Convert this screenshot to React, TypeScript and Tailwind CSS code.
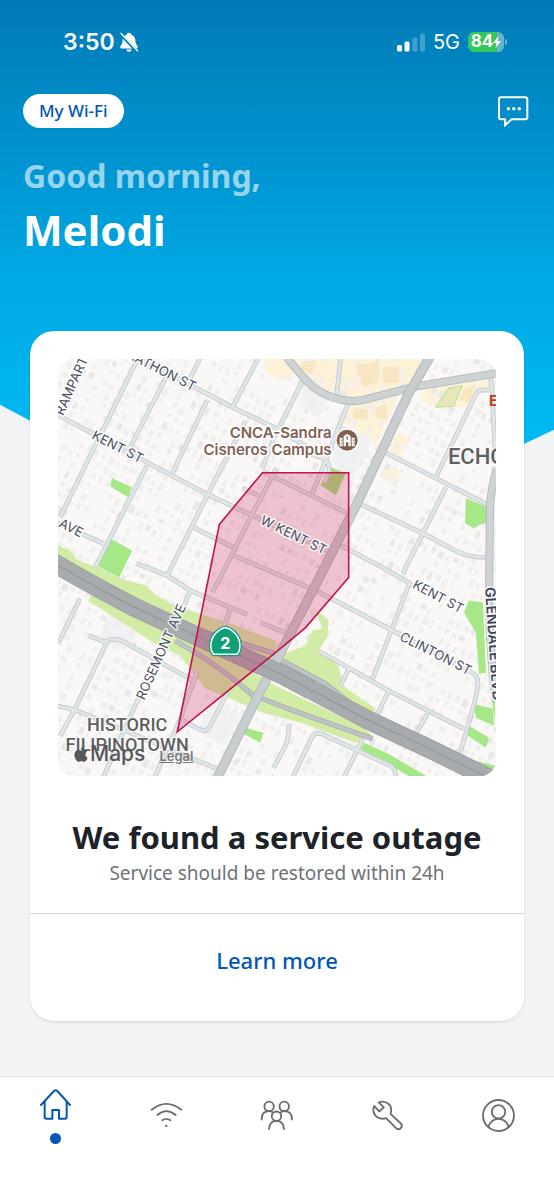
import type { ReactNode } from 'react';
import { FaApple } from 'react-icons/fa';

const MINOR_ROADS = [
  'M138 358L60 517',
  'M167 375L130 447',
  'M56 414L207 494L330 552',
  'M200 358L188 382',
  'M258 358L232 407',
  'M120 348L232 407L275 428L325 457',
  'M207 400L172 473',
  'M245 421L208 493L173 563L167 575',
  'M147 465L95 567',
  'M56 522L103 543',
  'M193 527L233 547',
  'M276 468L250 517L230 557L212 592',
  'M242 488L258 495',
  'M340 358L336 396',
  'M303 378L291 403L274 436L262 468',
  'M348 402L312 493',
  'M262 471L347 513',
  'M233 555L315 590L392 630L468 670Q478 675 477 684L474 700L458 757',
  'M291 448L320 457Q331 462 328 472L324 482',
  'M382 451L435 478L488 505',
  'M488 390H480Q477 390 475 394L435 477',
  'M489 372L491 390L494 450',
  'M358 503L422 533L458 552Q468 557 488 557',
  'M445 487L402 573',
  'M340 545L378 565L408 582L412 586',
  'M409 582L372 678',
  'M318 650L388 690L463 728',
  'M348 668L340 685',
  'M388 690L372 723',
  'M362 738L343 777',
  'M427 712L413 737',
  'M288 723Q289 736 285 745L273 767',
  'M292 777L311 737Q314 731 321 733L390 765Q395 768 395 777',
  'M56 705L75 709L130 732L217 768',
  'M88 635L104 641Q116 636 125 642L193 680',
  'M107 641L75 708L60 735',
  'M80 598L58 643',
  'M136 563L167 575L190 590L247 614',
  'M190 590L181 612',
  'M141 692L118 742L103 777',
  'M197 670L180 718L154 777',
  'M183 720L200 729Q207 731 210 725L227 692',
  'M260 622L290 634',
  'M230 608L222 630',
];

const BIG_ROADS = [
  'M286 357Q304 380 314 388Q336 404 362 400L412 387L497 373',
  'M496 468Q490 487 489 507L488 600Q489 650 495 700',
];

const HIGHWAY = 'M48 559Q92 585 133 606L193 634L280 673L367 719L433 750L490 778';
const RAMPS = 'M193 628L275 653M175 640Q215 662 252 694L285 707L372 738M278 658L325 683L378 725';
const BOULEVARD = 'M429 357L408 393L358 500L325 565L275 662L260 690L217 777';

const PARKS = [
  'M112 478L132 487L128 497L110 486Z',
  'M110 538L132 550L119 577L98 566Z',
  'M465 498L487 507L485 523L479 524L473 528L464 523Z',
  'M468 600L482 602L485 672L478 673L475 632L463 612Z',
  'M472 703L492 708L493 725L475 717Z',
  'M468 725L488 737L485 747L467 735Z',
  'M435 747L462 757L496 765V777H475L432 755Z',
  'M363 742L388 753L427 776L410 776L360 748Z',
  'M245 727L263 732L260 742L243 733Z',
  'M484 620L488 680L494 720V660Z',
];

const VERGES = [
  'M57 545L70 550L78 560L98 567L120 578L146 585L155 594L172 604L230 623L275 640L275 668L200 640L57 565Z',
  'M88 600L95 590L170 624L225 655L275 685L360 725L372 735L355 742L300 722L262 712L235 700L205 688L180 655L150 640Z',
  'M315 611L322 614L328 620L327 636L318 650L338 665L342 685L375 708L372 722L282 680L268 672L285 652L305 645L312 630L322 628Z',
];

// small building footprints, laid on the street grid
function buildFootprints(seed: number, skip: number) {
  let value = seed;
  const random = () => {
    value = (value * 16807) % 2147483647;
    return value / 2147483647;
  };
  let path = '';
  for (let row = -310; row < 310; row += 11) {
    for (let col = -310; col < 310; col += 8) {
      const w = 3 + Math.round(random() * 3);
      const h = 4 + Math.round(random() * 4);
      const shift = Math.round(random() * 2);
      if (random() > skip) {
        path += `M${276 + col} ${567 + row + shift}h${w}v${h}h${-w}z`;
      }
    }
  }
  return path;
}

const FOOTPRINTS = buildFootprints(41, 0.4);
const FOOTPRINTS_DARK = buildFootprints(977, 0.9);

function StreetLabel({ x, y, angle, children }: { x: number; y: number; angle: number; children: string }) {
  return (
    <text
      x={x}
      y={y}
      transform={`rotate(${angle} ${x} ${y})`}
      className="fill-[#474d5f] stroke-white/80 font-['Inter',sans-serif] text-[13px]"
      strokeWidth={3}
      strokeLinejoin="round"
      paintOrder="stroke"
    >
      {children}
    </text>
  );
}

function OutageMap() {
  return (
    <div className="relative overflow-hidden rounded-2xl">
      <svg viewBox="58 359 437 416" className="block w-full" role="img" aria-label="Outage area map">
        <rect x="58" y="359" width="437" height="417" fill="#f9f8f6" />
        <g fill="#fdf1d8">
          <path d="M263 359H425L408 388L360 398L335 396L312 382L300 372L280 380L266 372Z" />
          <path d="M346 404L400 393L375 445L350 425L335 420Z" />
          <path d="M425 388L495 375V390H478L470 405L440 410L418 398Z" />
          <path d="M398 432L410 437L398 458L386 452Z" />
          <path d="M385 465L400 472L395 484L380 478Z" />
        </g>
        <g fill="#f0f1f4">
          <path d="M305 385L328 397L318 418L297 405Z" />
          <path d="M342 425L372 440L352 480L330 462Z" />
          <path d="M110 610L142 625L125 650L98 640Z" />
          <path d="M213 700L240 712L225 745L196 730Z" />
        </g>
        <g transform="rotate(27 276 567)">
          <path d={FOOTPRINTS} fill="#f0efee" />
          <path d={FOOTPRINTS_DARK} fill="#e8e7e9" />
        </g>
        <g fill="#f8e6c3">
          <path d="M303 362L316 360L312 374L300 370Z" />
          <path d="M355 365L378 362V382L362 387Z" />
          <path d="M382 367H398V383H382Z" />
          <path d="M353 409H367V419H353Z" />
          <path d="M376 407L386 404V420L374 416Z" />
          <path d="M464 388L475 385L468 402L458 400Z" />
        </g>
        <path d="M448 388L461 386L453 406L435 407Z" fill="#e9e5bd" stroke="#b6e28d" strokeWidth={1} />
        <g fill="#d2eca6">{VERGES.map((d) => <path key={d} d={d} />)}</g>
        <g fill="#a6e788">{PARKS.map((d) => <path key={d} d={d} />)}</g>
        <path d="M330 467L345 473L335 495L320 485Z" fill="#a8e07f" />

        <g fill="none" strokeLinejoin="round">
          <g stroke="#bfc7ca" strokeWidth={4.600}>{MINOR_ROADS.map((d) => <path key={d} d={d} />)}</g>
          <g stroke="#e0e6e8" strokeWidth={3}>{MINOR_ROADS.map((d) => <path key={d} d={d} />)}</g>
          <g stroke="#aeb3b6" strokeWidth={8}>{BIG_ROADS.map((d) => <path key={d} d={d} />)}</g>
          <g stroke="#cdd2d4" strokeWidth={6.500}>{BIG_ROADS.map((d) => <path key={d} d={d} />)}</g>

          <path d={RAMPS} stroke="#a3a9ac" strokeWidth={5} />
          <path d={RAMPS} stroke="#bfc3c6" strokeWidth={3.500} />
          <path d={HIGHWAY} stroke="#989c9f" strokeWidth={19} />
          <path d={HIGHWAY} stroke="#a8abad" strokeWidth={17.500} />
          <path d={HIGHWAY} stroke="#8f9497" strokeWidth={1} />
          <path d={BOULEVARD} stroke="#acb1b4" strokeWidth={9.500} />
          <path d={BOULEVARD} stroke="#c8cdcf" strokeWidth={8} />
          {/* the highway bridges over the boulevard */}
          <path d="M250 660L280 673L310 689" stroke="#989c9f" strokeWidth={19} />
          <path d="M249 659L280 673L311 690" stroke="#a8abad" strokeWidth={17.500} />
          <path d="M249 659L280 673L311 690" stroke="#8f9497" strokeWidth={1} />
        </g>

        <path
          d="M262 472.500H348V577L305 627L275 652L177 731L219 524Z"
          fill="#d0104c"
          fillOpacity={0.23}
          stroke="#c4124c"
          strokeWidth={1.6}
        />

        <StreetLabel x={63} y={416} angle={-66}>RAMPART</StreetLabel>
        <StreetLabel x={108} y={348} angle={27}>MARATHON ST</StreetLabel>
        <StreetLabel x={91} y={438} angle={27}>KENT ST</StreetLabel>
        <StreetLabel x={58} y={526} angle={27}>AVE</StreetLabel>
        <StreetLabel x={259} y={523} angle={26}>W KENT ST</StreetLabel>
        <StreetLabel x={411} y={587} angle={28}>KENT ST</StreetLabel>
        <StreetLabel x={398} y={639} angle={27}>CLINTON ST</StreetLabel>
        <StreetLabel x={144} y={700} angle={-66}>ROSEMONT AVE</StreetLabel>
        <text
          x="484"
          y="587"
          transform="rotate(86 484 587)"
          className="fill-[#40465a] stroke-white/80 font-['Inter',sans-serif] text-[14px] font-semibold"
          strokeWidth={3}
          paintOrder="stroke"
        >
          GLENDALE BLVD
        </text>

        <g
          className="fill-[#815f53] stroke-white/90 font-['Inter',sans-serif] text-[15px] font-semibold"
          strokeWidth={3}
          paintOrder="stroke"
          textAnchor="end"
        >
          <text x="331" y="438">CNCA-Sandra</text>
          <text x="331" y="455">Cisneros Campus</text>
        </g>
        <circle cx="346.500" cy="440" r="11.500" fill="#fff" />
        <circle cx="346.500" cy="440" r="10.500" fill="#82604f" />
        <g fill="#fff">
          <path d="M343 446V436L346.500 433.500L350 436V446H347.700V442H345.300V446Z" />
          <path d="M339 437.500H342V446H339ZM351 437.500H354V446H351Z" />
        </g>
        <path d="M346 436H347.200V439.500H346ZM340.200 439H341V441H340.200ZM352.200 439H353V441H352.200ZM340.200 442.500H341V444H340.200ZM352.200 442.500H353V444H352.200Z" fill="#82604f" />

        <g
          className="fill-[#5d6063] stroke-white/80 font-['Roboto',sans-serif] font-medium"
          strokeWidth={2}
          paintOrder="stroke"
        >
          <text x="447" y="464" className="text-[22px]">ECHO PARK</text>
          <text x="127" y="730" className="text-[18px]" textAnchor="middle">HISTORIC</text>
          <text x="127" y="750" className="text-[18px]" textAnchor="middle">FILIPINOTOWN</text>
        </g>
        <text x="488" y="406" className="fill-[#b9431c] font-['Inter',sans-serif] text-[15px] font-bold">E</text>

        <path
          d="M225 627C230 628 240 634 239.500 646Q239.500 650 237 653.500H213Q210.500 650 210.500 646C210 634 220 628 225 627Z"
          fill="#0f9f77"
          stroke="#0f9f77"
          strokeWidth={4}
          strokeLinejoin="round"
        />
        <path
          d="M225 627C230 628 240 634 239.500 646Q239.500 650 237 653.500H213Q210.500 650 210.500 646C210 634 220 628 225 627Z"
          fill="#0f9f77"
          stroke="#fff"
          strokeWidth={1.500}
          strokeLinejoin="round"
        />
        <text x="225" y="648" textAnchor="middle" className="fill-white font-['Inter',sans-serif] text-[16px] font-bold">
          2
        </text>
      </svg>
      <div className="absolute bottom-2 left-3.5 flex items-end gap-3.5 font-['Inter',sans-serif] text-[#55575a]">
        <span className="flex items-center text-[21px] leading-7 font-medium">
          <FaApple className="size-[18px]" />
          Maps
        </span>
        <a href="#legal" className="text-[13px] leading-6 font-semibold text-[#77797c] underline">
          Legal
        </a>
      </div>
    </div>
  );
}

function StatusBar() {
  return (
    <div className="flex h-[84px] items-center justify-between pr-6 pl-10 font-['Inter',sans-serif]">
      <div className="flex items-center gap-1">
        <span className="text-[23px] font-semibold">3:50</span>
        <svg viewBox="358 93 60 62" className="size-5" aria-hidden="true">
          <path
            fill="#fff"
            d="M388 95C384 95 381 98 381 101C371 105 368 112 368 122C368 132 361 134 361 141Q361 144 365 144H411Q415 144 415 141C415 134 408 132 408 122C408 112 405 105 395 101C395 98 392 95 388 95ZM380 147H396A8 7 0 0 1 380 147Z"
          />
          <path d="M360 98L414 155" stroke="#0082bd" strokeWidth={9} />
          <path d="M363 97L415 152" stroke="#fff" strokeWidth={4} strokeLinecap="round" />
        </svg>
      </div>
      <div className="flex items-center">
        <svg viewBox="0 0 28 19" className="mr-2 h-[19px] w-7" fill="#fff" aria-hidden="true">
          <rect x="0" y="12" width="5" height="6.500" rx="1.500" />
          <rect x="7.500" y="8.500" width="5" height="10" rx="1.500" />
          <rect x="15.500" y="4.500" width="5" height="14" rx="1.500" opacity=".25" />
          <rect x="23" y="0.500" width="5" height="18" rx="1.500" opacity=".25" />
        </svg>
        <span className="mr-2 text-xl">5G</span>
        <span className="flex h-5 w-9 items-center justify-center rounded-md bg-linear-to-r from-[#34c759] from-80% to-[#66b5c9] to-80% text-[17px] font-bold">
          84
          <svg viewBox="0 0 8 12" className="h-3 w-2" fill="#fff" aria-hidden="true">
            <path d="M5.500 0L0 7H3.500L2.500 12L8 5H4.500Z" />
          </svg>
        </span>
        <span className="ml-px h-1.5 w-0.5 rounded-r-full bg-white/40" />
      </div>
    </div>
  );
}

function NavItem({ label, active, children }: { label: string; active?: boolean; children: ReactNode }) {
  return (
    <li className="flex-1">
      <a
        href={`#${label.toLowerCase()}`}
        aria-label={label}
        aria-current={active ? 'page' : undefined}
        className={
          active
            ? 'flex h-[67px] flex-col items-center justify-between pt-3 text-[#0057b8]'
            : 'flex h-[76px] items-center justify-center text-[#6b6d70]'
        }
      >
        {children}
        {active ? <span className="size-[11px] rounded-full bg-[#0057b8]" /> : null}
      </a>
    </li>
  );
}

export default function App() {
  return (
    <div className="flex min-h-screen flex-col bg-[#f2f3f5] font-['Noto_Sans',sans-serif]">
      <header className="bg-linear-to-b from-[#007ab6] via-[#00a8e4] via-50% to-[#00c6ff] px-[23px] pb-[300px] text-white [clip-path:polygon(0_0,100%_0,100%_77.3%,51.5%_100%,0_72.8%)]">
        <StatusBar />
        <div className="flex items-center justify-between pt-2.5">
          <button type="button" className="h-[34px] rounded-full bg-white px-4 text-[17px] font-medium text-[#0057b8]">
            My Wi-Fi
          </button>
          <button type="button" aria-label="Chat" className="mr-0.5">
            <svg viewBox="664 290 92 92" className="size-[31px]" fill="none" stroke="#fff" strokeWidth={6} aria-hidden="true">
              <path d="M673 294H745Q751 294 751 300V353Q751 359 745 359H704L685 377V359H673Q667 359 667 353V300Q667 294 673 294Z" />
              <g fill="#fff" stroke="none">
                <circle cx="695" cy="328" r="5" />
                <circle cx="711" cy="328" r="5" />
                <circle cx="727" cy="328" r="5" />
              </g>
            </svg>
          </button>
        </div>
        <h1 className="pt-7 font-bold">
          <span className="block text-[32px] leading-10 text-white/60">Good morning,</span>
          <span className="mt-2 block text-[42px] leading-[52px]">Melodi</span>
        </h1>
      </header>

      <main className="relative -mt-[225px] px-[30px] pb-[55px]">
        <section className="rounded-3xl bg-white shadow-sm">
          <div className="p-7 pb-0">
            <OutageMap />
          </div>
          <div className="border-b border-[#d5d7d9] px-4 pt-10 pb-[26px] text-center">
            <h2 className="text-[31px] leading-[43px] font-bold text-[#1d2329]">We found a service outage</h2>
            <p className="text-[19px] leading-7 text-[#6e7277]">Service should be restored within 24h</p>
          </div>
          <div className="pt-8 pb-[46px] text-center">
            <a href="#outage" className="text-[22px] leading-7 font-medium text-[#0057b8]">
              Learn more
            </a>
          </div>
        </section>
      </main>

      <nav className="mt-auto border-t border-[#e4e5e7] bg-white pb-[47px]">
        <ul className="flex">
          <NavItem label="Home" active>
            <svg viewBox="120 85 93 93" className="size-[31px]" fill="none" stroke="currentColor" strokeWidth={6} strokeLinecap="round" strokeLinejoin="round" aria-hidden="true">
              <path d="M123 133L162 91Q167 87 172 91L210 133" />
              <path d="M134 123V169Q134 174 139 174H157V148H177V174H195Q200 174 200 169V123" />
            </svg>
          </NavItem>
          <NavItem label="Network">
            <svg viewBox="450 120 99 99" className="size-[33px]" fill="none" stroke="currentColor" strokeWidth={5.500} strokeLinecap="round" aria-hidden="true">
              <path d="M455 152Q499 117 544 152M472 168Q499 145 527 168M487 184Q499 175 511 184" />
              <circle cx="499" cy="201" r="3.500" fill="currentColor" stroke="none" />
            </svg>
          </NavItem>
          <NavItem label="People">
            <svg viewBox="782 117 98 98" className="size-[33px]" fill="none" stroke="currentColor" strokeWidth={5.500} strokeLinecap="round" aria-hidden="true">
              <circle cx="809" cy="139" r="14" />
              <circle cx="854" cy="139" r="14" />
              <circle cx="831" cy="168" r="14" />
              <path d="M787 178C787 161 796 153 809 153Q815 153 820 157M877 178C877 161 868 153 854 153Q848 153 843 157" />
              <path d="M809 206C810 190 819 182 831 182S852 190 853 206" />
            </svg>
          </NavItem>
          <NavItem label="Tools">
            <svg viewBox="283 117 98 98" className="size-[33px]" fill="none" stroke="currentColor" strokeWidth={5.500} strokeLinecap="round" strokeLinejoin="round" aria-hidden="true">
              <path d="M306 127C324 120 343 132 343 150Q343 156 341 161L371 189C380 198 368 213 358 204L328 174C308 180 291 168 290 150Q290 143 293 138L307 154L321 142Z" />
            </svg>
          </NavItem>
          <NavItem label="Account">
            <svg viewBox="615 117 98 98" className="size-[33px]" fill="none" stroke="currentColor" strokeWidth={5.500} strokeLinecap="round" aria-hidden="true">
              <circle cx="664" cy="166" r="46" />
              <circle cx="664" cy="155" r="20" />
              <path d="M634 199C640 184 651 176 664 176S688 184 694 199" />
            </svg>
          </NavItem>
        </ul>
      </nav>
    </div>
  );
}
